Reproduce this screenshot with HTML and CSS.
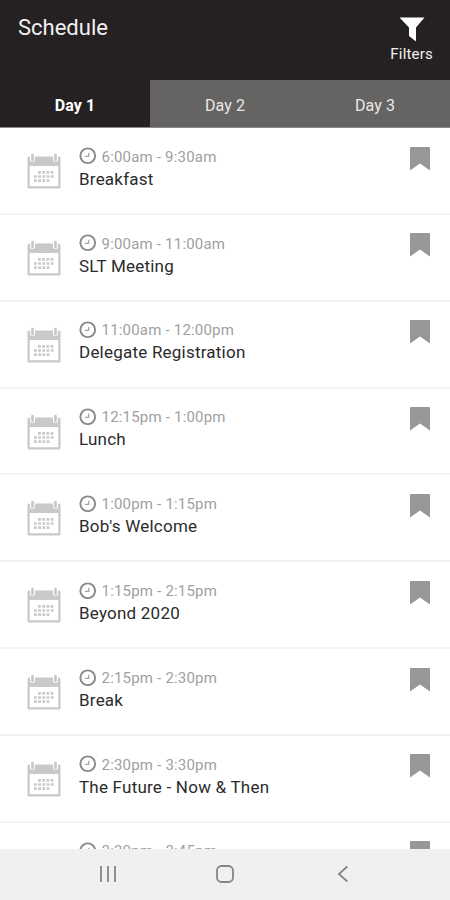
FILE: index.html
```
<!DOCTYPE html>
<html lang="en">
<head>
<meta charset="utf-8">
<title>Schedule</title>
<link rel="stylesheet" href="styles.css">
</head>
<body>
<svg class="defs" aria-hidden="true">
  <symbol id="calendar" viewBox="0 0 34 36">
    <path d="M2 3.5H32Q33.5 3.5 33.5 5V34Q33.5 35.5 32 35.5H2Q.5 35.5 .5 34V5Q.5 3.5 2 3.5ZM2.7 13V33.3H31.3V13Z" fill="#c9c9c9" fill-rule="evenodd"/>
    <path d="M5.5 2V6.5M28.5 2V6.5" stroke="#fff" stroke-width="5" stroke-linecap="round"/>
    <path d="M5.5 2V7M28.5 2V7" stroke="#c6c6c6" stroke-width="2.6" stroke-linecap="round"/>
    <path d="M11 19.3H27.5M7 23.5H27.5M7 27.7H23.5" stroke="#cacaca" stroke-width="2.7" stroke-dasharray="2.8 1.4"/>
  </symbol>
  <symbol id="clock" viewBox="0 0 18 18">
    <circle cx="9" cy="9" r="7.6" fill="none" stroke="#8b8b8b" stroke-width="2"/>
    <path d="M10 5.8V9.6H6" fill="none" stroke="#a5a5a5" stroke-width="1.3"/>
  </symbol>
  <symbol id="bookmark" viewBox="0 0 20 24">
    <path d="M1 0H19Q20 0 20 1V23.5L10 16.5L0 23.5V1Q0 0 1 0Z" fill="#979797"/>
  </symbol>
</svg>
<div class="app">
  <header class="header">
    <h1 class="title">Schedule</h1>
    <div class="filters">
      <svg class="funnel" viewBox="0 0 26 25"><path d="M.5 .5H25.5L17 10.5V24.5L10 19V10.5Z" fill="#fff"/></svg>
      <span>Filters</span>
    </div>
  </header>
  <nav class="tabs">
    <div class="tab active">Day 1</div>
    <div class="tab">Day 2</div>
    <div class="tab">Day 3</div>
  </nav>
  <main class="list">
    <div class="row"><svg class="calendar"><use href="#calendar"/></svg><div class="info"><div class="time"><svg class="clock"><use href="#clock"/></svg><span>6:00am - 9:30am</span></div><div class="name">Breakfast</div></div><svg class="bookmark"><use href="#bookmark"/></svg></div>
    <div class="row"><svg class="calendar"><use href="#calendar"/></svg><div class="info"><div class="time"><svg class="clock"><use href="#clock"/></svg><span>9:00am - 11:00am</span></div><div class="name">SLT Meeting</div></div><svg class="bookmark"><use href="#bookmark"/></svg></div>
    <div class="row"><svg class="calendar"><use href="#calendar"/></svg><div class="info"><div class="time"><svg class="clock"><use href="#clock"/></svg><span>11:00am - 12:00pm</span></div><div class="name">Delegate Registration</div></div><svg class="bookmark"><use href="#bookmark"/></svg></div>
    <div class="row"><svg class="calendar"><use href="#calendar"/></svg><div class="info"><div class="time"><svg class="clock"><use href="#clock"/></svg><span>12:15pm - 1:00pm</span></div><div class="name">Lunch</div></div><svg class="bookmark"><use href="#bookmark"/></svg></div>
    <div class="row"><svg class="calendar"><use href="#calendar"/></svg><div class="info"><div class="time"><svg class="clock"><use href="#clock"/></svg><span>1:00pm - 1:15pm</span></div><div class="name">Bob's Welcome</div></div><svg class="bookmark"><use href="#bookmark"/></svg></div>
    <div class="row"><svg class="calendar"><use href="#calendar"/></svg><div class="info"><div class="time"><svg class="clock"><use href="#clock"/></svg><span>1:15pm - 2:15pm</span></div><div class="name">Beyond 2020</div></div><svg class="bookmark"><use href="#bookmark"/></svg></div>
    <div class="row"><svg class="calendar"><use href="#calendar"/></svg><div class="info"><div class="time"><svg class="clock"><use href="#clock"/></svg><span>2:15pm - 2:30pm</span></div><div class="name">Break</div></div><svg class="bookmark"><use href="#bookmark"/></svg></div>
    <div class="row"><svg class="calendar"><use href="#calendar"/></svg><div class="info"><div class="time"><svg class="clock"><use href="#clock"/></svg><span>2:30pm - 3:30pm</span></div><div class="name">The Future - Now &amp; Then</div></div><svg class="bookmark"><use href="#bookmark"/></svg></div>
    <div class="row"><div class="calendar"></div><div class="info"><div class="time"><svg class="clock"><use href="#clock"/></svg><span>3:30pm - 3:45pm</span></div></div><svg class="bookmark"><use href="#bookmark"/></svg></div>
  </main>
  <footer class="navbar">
    <svg viewBox="0 0 20 20"><path d="M3 2V18M10 2V18M17 2V18" stroke="#858585" stroke-width="1.8"/></svg>
    <svg viewBox="0 0 20 20"><rect x="2" y="2" width="16" height="16" rx="4.5" fill="none" stroke="#858585" stroke-width="1.8"/></svg>
    <svg viewBox="0 0 20 20"><path d="M14.3 2.5L6 10L14.3 17.5" fill="none" stroke="#858585" stroke-width="1.8"/></svg>
  </footer>
</div>
</body>
</html>
```
FILE: styles.css
```
* { box-sizing: border-box; }
body { margin: 0; font-family: Roboto, sans-serif; background: #fff; }
svg { display: block; flex: none; }
.defs { position: absolute; width: 0; height: 0; }
.app { width: 450px; height: 900px; display: flex; flex-direction: column; overflow: hidden; }
.header { height: 80px; flex: none; background: #252122; color: #f0f0f0; display: flex; justify-content: space-between; padding: 0 17px 0 18px; }
.title { margin: 14px 0 0; font-size: 22px; line-height: 28px; font-weight: 400; letter-spacing: 0; }
.filters { display: flex; flex-direction: column; align-items: center; padding-top: 17px; font-size: 15px; line-height: 18px; letter-spacing: 0.2px; }
.funnel { width: 26px; height: 25px; margin-bottom: 3px; }
.tabs { height: 48px; flex: none; display: grid; grid-template-columns: repeat(3, 1fr); grid-template-rows: 47px; border-bottom: 1px solid #8b8a89; background: #252122; }
.tab { background: #656462; color: #e8e8e8; font-size: 16px; line-height: 51px; height: 47px; text-align: center; letter-spacing: 0.1px; }
.tab.active { background: #252122; color: #fff; font-weight: 700; }
.list { flex: 1; min-height: 0; overflow: hidden; }
.row { height: 86.85px; display: flex; align-items: flex-start; padding: 0 20px 0 27px; border-bottom: 2px solid #f3f3f3; }
.calendar { width: 34px; height: 36px; margin-top: 25px; }
.info { flex: 1; margin: 17.7px 0 0 18px; }
.time { display: flex; align-items: center; height: 21px; gap: 5px; color: #a0a0a0; font-size: 15px; letter-spacing: 0.2px; }
.time span { line-height: 21px; padding-top: 2px; }
.clock { width: 17.5px; height: 17.5px; }
.name { color: #2b2b2b; font-size: 17px; line-height: 22px; letter-spacing: 0.22px; margin: 1px 0 0; }
.bookmark { width: 20px; height: 24px; margin-top: 18.5px; }
.navbar { height: 51px; flex: none; background: #f0f0f0; display: flex; justify-content: center; align-items: center; gap: 97.5px; padding-bottom: 2px; }
.navbar svg { width: 20px; height: 20px; }
```
